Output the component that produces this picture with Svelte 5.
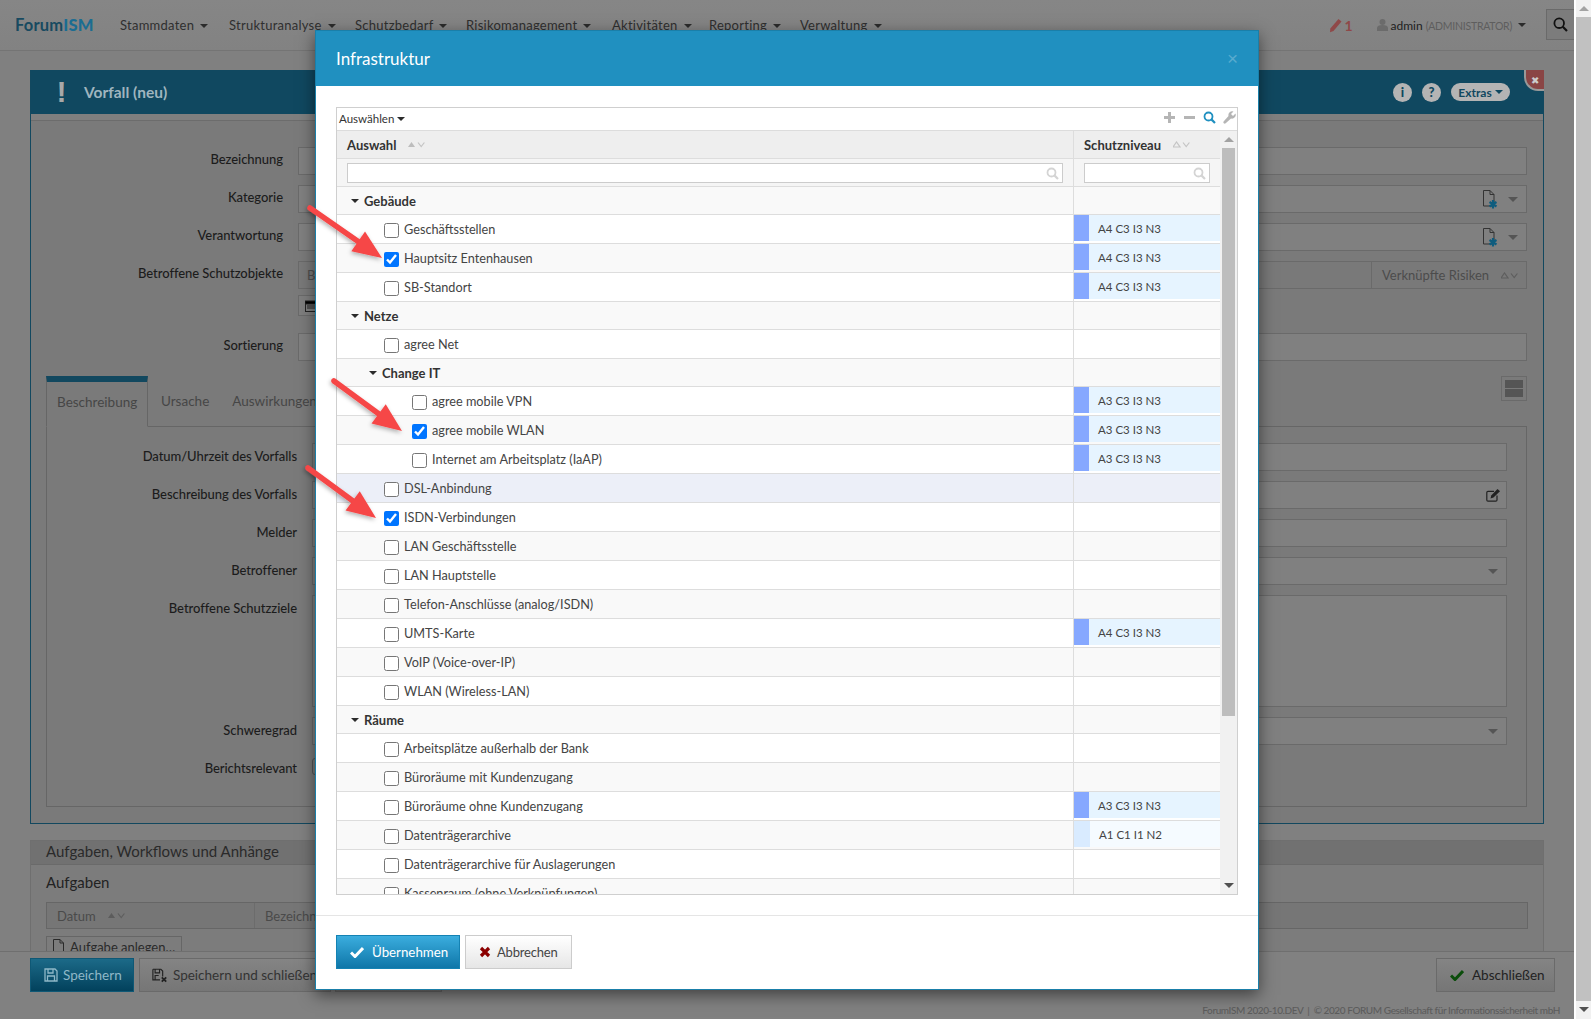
<script>
  const menu = ['Stammdaten','Strukturanalyse','Schutzbedarf','Risikomanagement','Aktivitäten','Reporting','Verwaltung'];
  const A4 = 'A4 C3 I3 N3', A3 = 'A3 C3 I3 N3', A1 = 'A1 C1 I1 N2';
  const rows = [
    {g:1,d:0,t:'Gebäude'},
    {d:0,t:'Geschäftsstellen',l:A4},
    {d:0,t:'Hauptsitz Entenhausen',l:A4,c:1},
    {d:0,t:'SB-Standort',l:A4},
    {g:1,d:0,t:'Netze'},
    {d:0,t:'agree Net'},
    {g:1,d:1,t:'Change IT'},
    {d:1,t:'agree mobile VPN',l:A3},
    {d:1,t:'agree mobile WLAN',l:A3,c:1},
    {d:1,t:'Internet am Arbeitsplatz (IaAP)',l:A3},
    {d:0,t:'DSL-Anbindung',h:1},
    {d:0,t:'ISDN-Verbindungen',c:1},
    {d:0,t:'LAN Geschäftsstelle'},
    {d:0,t:'LAN Hauptstelle'},
    {d:0,t:'Telefon-Anschlüsse (analog/ISDN)'},
    {d:0,t:'UMTS-Karte',l:A4},
    {d:0,t:'VoIP (Voice-over-IP)'},
    {d:0,t:'WLAN (Wireless-LAN)'},
    {g:1,d:0,t:'Räume'},
    {d:0,t:'Arbeitsplätze außerhalb der Bank'},
    {d:0,t:'Büroräume mit Kundenzugang'},
    {d:0,t:'Büroräume ohne Kundenzugang',l:A3},
    {d:0,t:'Datenträgerarchive',l:A1,low:1},
    {d:0,t:'Datenträgerarchive für Auslagerungen'},
    {d:0,t:'Kassenraum (ohne Verknüpfungen)'}
  ];
  const arrows = [[310,208,382,258],[334,381,402,431],[308,468,376,518]];
  function arrow(a){
    const [x1,y1,x2,y2]=a; const dx=x2-x1, dy=y2-y1, n=Math.hypot(dx,dy), ux=dx/n, uy=dy/n;
    const bx=x2-ux*29, by=y2-uy*29, px=-uy, py=ux;
    return {
      x1,y1,bx,by,
      pts:`${x2},${y2} ${bx+px*12},${by+py*12} ${bx-px*12},${by-py*12}`
    };
  }
</script>

{#snippet sort(on)}
  <svg class="sort" width="17" height="7" viewBox="0 0 17 7"><path d="M0 6 3.5 1 7 6z" fill={on ? '#bdbdbd' : 'none'} stroke={on ? 'none' : '#c4c4c4'} stroke-width="1.2"/><path d="M10 1.5l3.2 4 3.2-4" fill="none" stroke="#c4c4c4" stroke-width="1.2"/></svg>
{/snippet}
{#snippet sortdim(on)}
  <svg class="sort" width="17" height="7" viewBox="0 0 17 7"><path d="M0 6 3.5 1 7 6z" fill={on ? '#5c5c5c' : 'none'} stroke={on ? 'none' : '#5e5e5e'} stroke-width="1.2"/><path d="M10 1.5l3.2 4 3.2-4" fill="none" stroke="#5e5e5e" stroke-width="1.2"/></svg>
{/snippet}
{#snippet fileplus()}
  <svg class="fileplus" width="15" height="19" viewBox="0 0 15 19"><path d="M.5.5h6.5l4 4v11.500H.5zM7 .5v4h4" fill="none" stroke="#333" stroke-width="1"/><path d="M10 10v8.500M6.500 12l7 4.500M13.500 12l-7 4.500" stroke="#0e5c7e" stroke-width="2.200"/></svg>
{/snippet}
{#snippet mag(c)}
  <svg width="13" height="13" viewBox="0 0 13 13"><circle cx="5.5" cy="5.5" r="4" fill="none" stroke={c} stroke-width="1.8"/><path d="M8.4 8.4 12 12" stroke={c} stroke-width="2.2"/></svg>
{/snippet}

<div class="root">
  <div class="page">
    <nav class="nav">
      <div class="brand">Forum<b>ISM</b></div>
      <ul class="menu">
        {#each menu as m}<li>{m}<i class="caret"></i></li>{/each}
      </ul>
      <div class="navright">
        <svg width="13" height="15" viewBox="0 0 13 15"><path d="M9.5 1 12.5 3.5 4.5 13 1 14.2 1.3 10.5z" fill="#8f4848"/></svg>
        <span class="count">1</span>
        <svg class="user" width="11" height="12" viewBox="0 0 11 12"><circle cx="5.5" cy="3" r="3" fill="#6b6b6b"/><path d="M0 12V9c0-2 2-3 5.5-3S11 7 11 9v3z" fill="#6b6b6b"/></svg>
        <span class="adm">admin <em>(ADMINISTRATOR)</em></span><i class="caret"></i>
        <div class="searchbtn"><svg width="15" height="15" viewBox="0 0 15 15"><circle cx="6.2" cy="6.2" r="4.8" fill="none" stroke="#111" stroke-width="1.8"/><path d="M9.8 9.8 14 14" stroke="#111" stroke-width="2.2"/></svg></div>
      </div>
    </nav>

    <section class="panel">
      <header class="phead">
        <span class="bang">!</span>
        <h1>Vorfall (neu)</h1>
        <div class="ptools">
          <span class="circ">i</span><span class="circ">?</span>
          <span class="extras">Extras<i class="caret blue"></i></span>
        </div>
        <span class="closetab">✖</span>
      </header>
      <div class="strip"></div>
      <div class="form main">
        <label>Bezeichnung</label><div class="field"></div>
        <label>Kategorie</label><div class="field end">{@render fileplus()}<i class="caret big"></i></div>
        <label>Verantwortung</label><div class="field end">{@render fileplus()}<i class="caret big"></i></div>
        <label>Betroffene Schutzobjekte</label>
        <div class="stack">
          <div class="field dark split"><span class="bz">Bezeichnung</span><span class="vr">Verknüpfte Risiken {@render sortdim(false)}</span></div>
          <div class="calbtn"><svg width="13" height="12" viewBox="0 0 13 12"><rect x=".5" y="1.5" width="12" height="10" fill="none" stroke="#222"/><path d="M0 1h13v3H0zM2 6h9M2 8h9" stroke="#222"/></svg></div>
        </div>
        <label class="sortlab">Sortierung</label><div class="field sortf"></div>
      </div>

      <div class="tabs">
        <div class="tabstrip">
          <div class="tab on">Beschreibung</div>
          <div class="tab">Ursache</div>
          <div class="tab">Auswirkungen</div>
          <div class="layoutbtn"><i></i><i></i></div>
        </div>
        <div class="form inner">
          <label>Datum/Uhrzeit des Vorfalls</label><div class="field"></div>
          <label>Beschreibung des Vorfalls</label>
          <div class="field end edit"><svg width="14" height="13" viewBox="0 0 14 13"><path d="M11 6.5V11a1.2 1.2 0 0 1-1.2 1.2H2A1.2 1.2 0 0 1 .8 11V3.5A1.2 1.2 0 0 1 2 2.3h6" fill="none" stroke="#222" stroke-width="1.2"/><path d="M11.5 0 14 2.3 7.5 8.6l-3 .8.7-3z" fill="#222"/></svg></div>
          <label>Melder</label><div class="field"></div>
          <label>Betroffener</label><div class="field end"><i class="caret big"></i></div>
          <label>Betroffene Schutzziele</label><div class="field tall"></div>
          <label>Schweregrad</label><div class="field end"><i class="caret big"></i></div>
          <label class="br">Berichtsrelevant</label><div class="cbdim"></div>
        </div>
      </div>
    </section>

    <section class="tasks">
      <div class="thead">Aufgaben, Workflows und Anhänge</div>
      <h2>Aufgaben</h2>
      <div class="ttable"><span class="tc1">Datum {@render sortdim(true)}</span><span class="tc2">Bezeichnung</span></div>
      <div class="addbtn"><svg width="11" height="14" viewBox="0 0 11 14"><path d="M.5.5h6.5l3.5 3.5v9.500H.5zM7 .5V4h3.500" fill="none" stroke="#2a2a2a"/></svg>Aufgabe anlegen…</div>
    </section>

    <footer class="bar">
      <div class="bbtn primary"><svg width="14" height="14" viewBox="0 0 14 14"><path d="M1 1h10l2 2v10H1zM4 1v4h5V1M3.500 13V8h7v5" fill="none" stroke="#8fb8c8" stroke-width="1.300"/></svg>Speichern</div>
      <div class="bbtn second"><svg width="16" height="15" viewBox="0 0 18 16"><path d="M1 1h9l2 2v6M1 1v12h8M3.500 1v4h5V1M3.500 13V8h4" fill="none" stroke="#222" stroke-width="1.300"/><path d="M11 10l5 5M16 10l-5 5" stroke="#222" stroke-width="2"/></svg>Speichern und schließen</div>
      <div class="bbtn third"></div>
      <div class="bbtn last"><svg width="14" height="12" viewBox="0 0 14 12"><path d="M1 6.500 5 10.500 13 2" fill="none" stroke="#0b4d0b" stroke-width="3"/></svg>Abschließen</div>
    </footer>
    <div class="copy">ForumISM 2020-10.DEV &nbsp;|&nbsp; © 2020 FORUM Gesellschaft für Informationssicherheit mbH</div>

    <div class="modal">
      <header class="mhead"><h3>Infrastruktur</h3><span class="x">×</span></header>
      <div class="mbody">
        <div class="grid">
          <div class="gtool">
            <span class="sel">Auswählen<i class="caret tiny"></i></span>
            <div class="gicons">
              <svg width="13" height="13" viewBox="0 0 13 13"><path d="M6.500 1v11M1 6.500h11" stroke="#b5b5b5" stroke-width="3"/></svg>
              <svg width="13" height="13" viewBox="0 0 13 13"><path d="M1 6.500h11" stroke="#b5b5b5" stroke-width="3"/></svg>
              {@render mag('#2090c0')}
              <svg width="13" height="13" viewBox="0 0 13 13"><path d="M12.500 2.500 10 5 8 3 10.500.5A3.800 3.800 0 0 0 5.500 5L.8 10.300a1.300 1.300 0 0 0 1.900 1.900L8 7.500a3.800 3.800 0 0 0 4.500-5z" fill="#b5b5b5"/></svg>
            </div>
          </div>
          <div class="gwrap">
            <div class="gmain">
              <div class="ghead row0"><div class="c1"><b>Auswahl</b>{@render sort(true)}</div><div class="c2"><b>Schutzniveau</b>{@render sort(false)}</div></div>
              <div class="gfilter row0">
                <div class="c1"><div class="inp">{@render mag('#d4d4d4')}</div></div>
                <div class="c2"><div class="inp">{@render mag('#d4d4d4')}</div></div>
              </div>
              <div class="gbody">
                {#each rows as r, i}
                  <div class="grow" class:group={r.g} class:alt={i % 2 === 0} class:hover={r.h}>
                    <div class="name" class:d1={r.d === 1}>
                      {#if r.g}<i class="caret dark"></i><strong>{r.t}</strong>
                      {:else}<input type="checkbox" checked={!!r.c} /><span>{r.t}</span>{/if}
                    </div>
                    <div class="lvlc">
                      {#if r.l}<div class="lvl" class:low={r.low}><i></i><span>{r.l}</span></div>{/if}
                    </div>
                  </div>
                {/each}
              </div>
            </div>
            <div class="gscroll"><i class="up"></i><div class="gthumb"></div><i class="down"></i></div>
          </div>
        </div>
      </div>
      <footer class="mfoot">
        <div class="mbtn ok"><svg width="14" height="12" viewBox="0 0 14 12"><path d="M1 6.500 5 10.500 13 2" fill="none" stroke="#fff" stroke-width="3"/></svg>Übernehmen</div>
        <div class="mbtn cancel"><svg width="12" height="12" viewBox="0 0 12 12"><path d="M2 2l8 8M10 2l-8 8" stroke="#8b0000" stroke-width="3.200"/></svg>Abbrechen</div>
      </footer>
    </div>

    <svg class="arrows" width="1574" height="1019" viewBox="0 0 1574 1019">
      <defs><filter id="ash" x="-20%" y="-20%" width="140%" height="140%"><feDropShadow dx="-1" dy="2" stdDeviation="2" flood-color="#000" flood-opacity=".3"/></filter></defs>
      {#each arrows as a}
        {@const p = arrow(a)}
        <g filter="url(#ash)">
          <line x1={p.x1} y1={p.y1} x2={p.bx} y2={p.by} stroke="#f64646" stroke-width="5.500" stroke-linecap="round"/>
          <polygon points={p.pts} fill="#f64646"/>
        </g>
      {/each}
    </svg>
  </div>
  <aside class="pscroll"><i class="up"></i><div class="pthumb"></div><i class="down"></i></aside>
</div>

<style>
  :global(body){margin:0;background:#808080;}
  *{box-sizing:border-box;}
  .root{display:flex;height:100vh;overflow:hidden;font-family:Lato,"Open Sans",sans-serif;font-size:13px;color:#222;}
  .page{position:relative;width:1574px;height:1019px;overflow:hidden;background:#808080;}
  .pscroll{width:17px;background:#f1f1f1;border-left:2px solid #fff;display:flex;flex-direction:column;align-items:center;}
  .pscroll .up,.gscroll .up{width:0;height:0;border:5px solid transparent;border-top:0;border-bottom:5px solid #a3a3a3;margin:6px 0;}
  .pscroll .down,.gscroll .down{width:0;height:0;border:5px solid transparent;border-bottom:0;border-top:5px solid #505050;margin:6px 0;}
  .pthumb{width:15px;height:984px;background:#c1c1c1;}

  i.caret{display:inline-block;width:0;height:0;border:4.500px solid transparent;border-bottom:0;border-top:4.500px solid #2b2b2b;margin-left:6px;vertical-align:2px;}
  i.caret.big{border-width:5.500px 5.500px 0;border-top-color:#555;margin-left:10px;}
  i.caret.blue{border-top-color:#104860;margin-left:3px;border-width:4px 4px 0;}
  i.caret.tiny{border-width:4px 4px 0;margin-left:3px;}
  i.caret.dark{margin:0 5px 0 0;border-width:4px 4px 0;vertical-align:2px;}

  .nav{height:51px;display:flex;align-items:center;padding-left:15px;background:linear-gradient(#868686,#828282);border-bottom:1px solid #747474;}
  .brand{width:105px;font-size:16.500px;font-weight:700;color:#184a60;letter-spacing:.2px;}
  .brand b{color:#1b6d92;}
  .menu{display:grid;grid-template-columns:109px 126px 111px 146px 97px 91px 100px;list-style:none;margin:0;padding:0;font-size:13px;color:#2f2f2f;letter-spacing:.25px;}
  .navright{display:flex;align-items:center;margin-left:auto;}
  .count{color:#8f4848;font-weight:700;font-size:14px;margin:0 24px 0 2px;}
  .user{margin-right:3px;}
  .adm{color:#1e1e1e;font-size:12px;}
  .adm em{font-style:normal;color:#5e5e5e;font-size:10.500px;letter-spacing:-.25px;}
  .searchbtn{width:28px;height:31px;margin:-1px 0 0 20px;border:1px solid #6a6a6a;border-right:0;background:#7c7c7c;display:flex;align-items:center;justify-content:center;}

  .panel{margin:19px 30px 0;width:1514px;border:1px solid #12485f;border-top:0;height:754px;background:#7a7a7a;}
  .phead{position:relative;height:44px;background:#104860;display:flex;align-items:center;color:#adadad;}
  .bang{width:53px;text-align:center;font-family:"Liberation Sans",sans-serif;font-size:30px;font-weight:700;color:#a8a8a8;line-height:1;padding-left:8px;}
  .phead h1{margin:0;font-size:15.500px;font-weight:700;color:#9fb5bf;}
  .ptools{margin-left:auto;margin-right:33px;display:flex;align-items:center;gap:10px;}
  .circ{width:19px;height:19px;border-radius:50%;background:#b4b4b4;color:#104860;font-weight:900;font-size:13px;display:flex;align-items:center;justify-content:center;}
  .extras{width:59px;height:18px;border-radius:9px;background:#b4b4b4;color:#104860;font-weight:700;font-size:12px;display:flex;align-items:center;justify-content:center;margin-left:0;}
  .closetab{position:absolute;right:-1px;top:0;width:20px;height:21px;background:#8a4545;border-left:2px solid #999;border-bottom:2px solid #999;border-bottom-left-radius:14px;color:#ccc;font-size:10px;display:flex;align-items:center;justify-content:center;}
  .strip{height:7px;background:#7f7f7f;border-bottom:1px solid #6c6c6c;}

  .form{display:grid;row-gap:10px;column-gap:15px;align-content:start;}
  .form label{text-align:right;line-height:26px;font-size:13px;font-weight:500;color:#1c1c1c;letter-spacing:-.05px;}
  .main{grid-template-columns:252px 1fr;padding:26px 16px 0 0;}
  .main label{line-height:24px;}
  .field{height:28px;background:#808080;border:1px solid #6a6a6a;display:flex;align-items:center;}
  .field.end{justify-content:flex-end;padding-right:8px;}
  .field.edit{padding-right:6px;}
  .field.dark{background:#797979;}
  .split .bz{padding-left:8px;color:#4e4e4e;}
  .split .vr{margin-left:auto;width:155px;height:100%;border-left:1px solid #6a6a6a;color:#4c4c4c;padding-left:10px;display:flex;align-items:center;gap:12px;}
  .stack{display:flex;flex-direction:column;gap:6px;}
  .calbtn{width:60px;height:21px;border:1px solid #6a6a6a;background:#7e7e7e;display:flex;align-items:center;padding-left:6px;justify-content:flex-start;}
  .sortlab,.sortf{margin-top:7px;}

  .tabs{margin:15px 16px 0 15px;}
  .tabstrip{height:51px;display:flex;position:relative;border-bottom:1px solid #666;}
  .tab{padding:16px 10px 0 11px;font-size:13.500px;color:#464646;height:51px;line-height:18px;margin-left:2px;}
  .tab.on{width:102px;margin-left:0;border:1px solid #666;border-top:6px solid #12485f;border-bottom:1px solid #7a7a7a;padding-top:11px;padding-left:10px;padding-right:0;background:#7a7a7a;}
  .layoutbtn{position:absolute;right:0;top:0;width:26px;height:25px;border:1px solid #6a6a6a;padding:3px;display:flex;flex-direction:column;gap:1px;}
  .layoutbtn i{flex:1;background:#555;}
  .inner{grid-template-columns:250px 1fr;padding:16px 19px 0 0;height:380px;border:1px solid #666;border-top:0;}
  .tall{height:112px;}
  .cbdim{width:14px;height:17px;border:1px solid #555;border-radius:3px;margin-top:3px;}

  .tasks{position:relative;margin:16px 30px 0;width:1514px;height:180px;border:1px solid #6f6f6f;padding:0 15px;background:#7c7c7c;}
  .thead{margin:0 -15px;height:24px;padding-left:15px;background:#717171;border-bottom:1px solid #6a6a6a;font-size:15px;line-height:21px;color:#2a2a2a;}
  .tasks h2{margin:0;height:37px;font-size:15px;font-weight:400;line-height:34px;color:#222;}
  .ttable{height:27px;border:1px solid #666;display:flex;align-items:center;background:#767676;color:#4a4a4a;}
  .tc1{width:208px;padding-left:10px;display:flex;align-items:center;gap:12px;height:100%;border-right:1px solid #6c6c6c;}
  .tc2{padding-left:10px;}
  .addbtn{margin-top:7px;width:136px;height:30px;border:1px solid #666;display:flex;align-items:flex-start;gap:6px;padding:2px 0 0 6px;color:#2a2a2a;background:#7c7c7c;}

  .bar{position:absolute;left:0;right:0;bottom:0;height:68px;background:#818181;border-top:1px solid #6f6f6f;display:flex;padding:6px 19px 0 30px;align-items:flex-start;}
  .bbtn{height:34px;display:flex;align-items:center;gap:7px;font-size:13.500px;border:1px solid #6a6a6a;background:linear-gradient(#848484,#767676);color:#333;padding-left:13px;white-space:nowrap;overflow:hidden;}
  .bbtn.primary{width:104px;background:linear-gradient(#1c6a88,#02415c);border-color:#0f5875;color:#8fb8c8;gap:5px;}
  .bbtn.second{width:192px;margin-left:5px;padding-left:12px;gap:5px;}
  .bbtn.third{width:107px;margin-left:4px;}
  .bbtn.last{width:119px;margin-left:auto;color:#222;gap:8px;padding-left:13px;}
  .copy{position:absolute;right:14px;bottom:2px;font-size:10px;color:#5c5c5c;letter-spacing:-.42px;line-height:14px;font-weight:500;}

  .modal{position:absolute;left:315px;top:30px;width:944px;height:960px;background:#fff;border:1px solid #1a7fa9;box-shadow:0 5px 15px rgba(0,0,0,.5);display:flex;flex-direction:column;}
  .mhead{height:55px;background:#2090c0;display:flex;align-items:center;justify-content:space-between;padding:0 20px;flex:none;}
  .mhead h3{margin:0;font-size:17px;font-weight:400;color:#fff;}
  .x{font-family:"Liberation Sans",sans-serif;font-size:19px;color:#58abcf;}
  .mbody{padding:21px 20px 0;flex:none;}
  .grid{height:788px;border:1px solid #cfcfcf;display:flex;flex-direction:column;overflow:hidden;}
  .gtool{height:22px;flex:none;display:flex;align-items:center;justify-content:space-between;padding:0 1px 0 2px;font-size:11.500px;color:#333;}
  .sel{margin-top:-2px;}
  .gicons{display:flex;gap:7px;margin-top:-3px;}
  .gwrap{display:flex;height:766px;overflow:hidden;border-top:1px solid #dcdcdc;}
  .gmain{width:883px;flex:none;}
  .row0{display:grid;grid-template-columns:736px 147px;}
  .ghead{height:28px;background:#eee;border-bottom:1px solid #ddd;}
  .ghead .c1,.ghead .c2{display:flex;align-items:center;gap:12px;font-size:13px;padding-left:10px;color:#333;}
  .ghead .c2{border-left:1px solid #ddd;}
  .gfilter{height:28px;background:#f5f5f5;border-bottom:1px solid #ddd;}
  .gfilter .c1,.gfilter .c2{padding:4px 10px;}
  .gfilter .c2{border-left:1px solid #ddd;}
  .inp{height:20px;background:#fff;border:1px solid #ccc;display:flex;align-items:center;justify-content:flex-end;padding-right:3px;}
  .gbody{overflow:hidden;}
  .grow{display:grid;grid-template-columns:736px 147px;height:29px;border-bottom:1px solid #ddd;background:#fff;}
  .grow.alt{background:#f9f9f9;}
  .grow.group{height:28px;}
  .grow.hover{background:#eceff8;}
  .name{display:flex;align-items:center;padding-left:47px;color:#444;font-size:12.700px;}
  .name.d1{padding-left:75px;}
  .group .name{padding-left:14px;font-size:13px;}
  .group .name.d1{padding-left:32px;}
  .name strong{color:#333;font-weight:700;}
  .name input{width:15px;height:15px;margin:2px 5px 0 0;flex:none;}
  .lvlc{border-left:1px solid #ddd;}
  .lvl{height:26px;display:flex;align-items:center;background:#e6f4ff;}
  .lvl i{width:15px;height:100%;background:#86a8ff;}
  .lvl span{padding-left:9px;font-size:11.500px;color:#444;}
  .lvl.low{background:#f5fbff;}
  .lvl.low i{width:16px;background:#d9ebff;}
  .gscroll{width:17px;flex:none;background:#f1f1f1;display:flex;flex-direction:column;align-items:center;position:relative;}
  .gscroll .up{border-bottom-color:#a3a3a3;margin:6px 0;}
  .gthumb{width:13px;height:568px;background:#bdbdbd;}
  .gscroll .down{position:absolute;bottom:6px;margin:0;}
  .mfoot{margin-top:20px;border-top:1px solid #e5e5e5;padding:19px 20px;display:flex;gap:5px;}
  .mbtn{height:34px;display:flex;align-items:center;font-size:13.300px;}
  .mbtn.ok{width:124px;background:linear-gradient(#3badde,#0e76a8);color:#fff;border:1px solid #1482b3;padding-left:13px;gap:8px;}
  .mbtn.cancel{width:107px;background:linear-gradient(#fff,#e6e6e6);border:1px solid #ccc;color:#444;padding-left:13px;gap:6px;font-size:13px;letter-spacing:-.2px;}
  .arrows{position:absolute;left:0;top:0;pointer-events:none;}
</style>
